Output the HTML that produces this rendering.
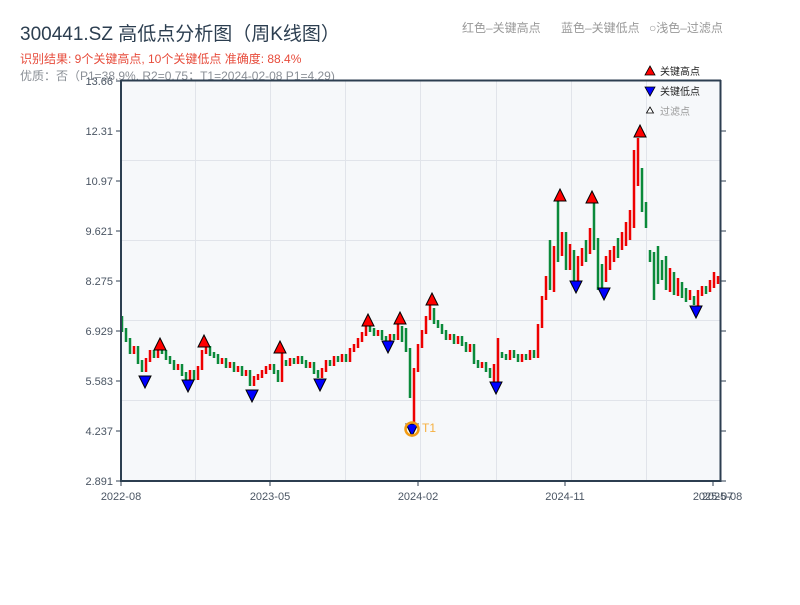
<!DOCTYPE html>
<html><head><meta charset="utf-8"><style>
body{margin:0;width:800px;height:600px;background:#fff;overflow:hidden;font-family:"Liberation Sans","Noto Sans CJK SC",sans-serif;}
svg text{font-family:"Liberation Sans","Noto Sans CJK SC",sans-serif;}
</style></head><body>
<svg width="800" height="600" viewBox="0 0 800 600" xmlns="http://www.w3.org/2000/svg">
<text x="20" y="40" font-size="19" fill="#2c3e50">300441.SZ 高低点分析图（周K线图）</text>
<text x="20" y="63" font-size="12" fill="#e74c3c">识别结果: 9个关键高点, 10个关键低点  准确度: 88.4%</text>
<text x="20" y="80" font-size="12" fill="#8a8f96">优质：否（P1=38.9%, R2=0.75；T1=2024-02-08 P1=4.29)</text>
<text x="462" y="32" font-size="12" fill="#999">红色–关键高点</text>
<text x="561" y="32" font-size="12" fill="#999">蓝色–关键低点</text>
<text x="649" y="32" font-size="12" fill="#999">○浅色–过滤点</text>
<rect x="121" y="80" width="600" height="401" fill="#f6f8fa"/>
<g stroke="#e1e4ea" stroke-width="1">
<line x1="195.5" y1="80" x2="195.5" y2="481"/><line x1="270.5" y1="80" x2="270.5" y2="481"/><line x1="345.5" y1="80" x2="345.5" y2="481"/><line x1="420.5" y1="80" x2="420.5" y2="481"/><line x1="496.5" y1="80" x2="496.5" y2="481"/><line x1="571.5" y1="80" x2="571.5" y2="481"/><line x1="646.5" y1="80" x2="646.5" y2="481"/>
<line x1="121" y1="160.5" x2="721" y2="160.5"/><line x1="121" y1="240.5" x2="721" y2="240.5"/><line x1="121" y1="320.5" x2="721" y2="320.5"/><line x1="121" y1="400.5" x2="721" y2="400.5"/>
</g>
<g stroke="#0a8a3a" stroke-width="2.5">
<line x1="122" y1="316" x2="122" y2="332"/><line x1="126" y1="328" x2="126" y2="342"/><line x1="130" y1="338" x2="130" y2="354"/><line x1="138" y1="346" x2="138" y2="364"/><line x1="142" y1="360" x2="142" y2="372"/><line x1="154" y1="350" x2="154" y2="358"/><line x1="162" y1="346" x2="162" y2="354"/><line x1="166" y1="350" x2="166" y2="360"/><line x1="170" y1="356" x2="170" y2="364"/><line x1="174" y1="360" x2="174" y2="370"/><line x1="182" y1="364" x2="182" y2="376"/><line x1="186" y1="372" x2="186" y2="380"/><line x1="194" y1="370" x2="194" y2="380"/><line x1="210" y1="346" x2="210" y2="356"/><line x1="214" y1="352" x2="214" y2="358"/><line x1="218" y1="354" x2="218" y2="364"/><line x1="226" y1="358" x2="226" y2="368"/><line x1="234" y1="362" x2="234" y2="372"/><line x1="242" y1="366" x2="242" y2="376"/><line x1="250" y1="370" x2="250" y2="386"/><line x1="274" y1="364" x2="274" y2="374"/><line x1="278" y1="370" x2="278" y2="382"/><line x1="286" y1="360" x2="286" y2="366"/><line x1="294" y1="358" x2="294" y2="364"/><line x1="302" y1="356" x2="302" y2="364"/><line x1="306" y1="360" x2="306" y2="368"/><line x1="314" y1="362" x2="314" y2="374"/><line x1="318" y1="370" x2="318" y2="378"/><line x1="330" y1="360" x2="330" y2="366"/><line x1="338" y1="356" x2="338" y2="362"/><line x1="346" y1="354" x2="346" y2="362"/><line x1="370" y1="324" x2="370" y2="332"/><line x1="374" y1="328" x2="374" y2="336"/><line x1="382" y1="330" x2="382" y2="340"/><line x1="386" y1="336" x2="386" y2="344"/><line x1="394" y1="334" x2="394" y2="340"/><line x1="402" y1="326" x2="402" y2="342"/><line x1="406" y1="328" x2="406" y2="352"/><line x1="410" y1="348" x2="410" y2="398"/><line x1="434" y1="308" x2="434" y2="324"/><line x1="438" y1="320" x2="438" y2="328"/><line x1="442" y1="324" x2="442" y2="334"/><line x1="446" y1="330" x2="446" y2="340"/><line x1="454" y1="334" x2="454" y2="344"/><line x1="462" y1="336" x2="462" y2="346"/><line x1="466" y1="342" x2="466" y2="352"/><line x1="474" y1="344" x2="474" y2="364"/><line x1="478" y1="360" x2="478" y2="368"/><line x1="486" y1="362" x2="486" y2="372"/><line x1="490" y1="368" x2="490" y2="378"/><line x1="502" y1="352" x2="502" y2="358"/><line x1="506" y1="354" x2="506" y2="360"/><line x1="514" y1="350" x2="514" y2="358"/><line x1="518" y1="354" x2="518" y2="362"/><line x1="526" y1="354" x2="526" y2="360"/><line x1="534" y1="350" x2="534" y2="358"/><line x1="550" y1="240" x2="550" y2="290"/><line x1="558" y1="200" x2="558" y2="262"/><line x1="566" y1="232" x2="566" y2="270"/><line x1="574" y1="250" x2="574" y2="281"/><line x1="586" y1="240" x2="586" y2="262"/><line x1="594" y1="202" x2="594" y2="250"/><line x1="598" y1="238" x2="598" y2="290"/><line x1="602" y1="264" x2="602" y2="288"/><line x1="618" y1="238" x2="618" y2="258"/><line x1="642" y1="168" x2="642" y2="212"/><line x1="646" y1="202" x2="646" y2="228"/><line x1="650" y1="250" x2="650" y2="262"/><line x1="654" y1="252" x2="654" y2="300"/><line x1="658" y1="246" x2="658" y2="284"/><line x1="662" y1="260" x2="662" y2="280"/><line x1="666" y1="256" x2="666" y2="290"/><line x1="674" y1="272" x2="674" y2="295"/><line x1="682" y1="282" x2="682" y2="298"/><line x1="686" y1="288" x2="686" y2="302"/><line x1="694" y1="296" x2="694" y2="305"/><line x1="706" y1="286" x2="706" y2="294"/>
</g>
<g stroke="#e00" stroke-width="2.5">
<line x1="134" y1="346" x2="134" y2="354"/><line x1="146" y1="358" x2="146" y2="372"/><line x1="150" y1="350" x2="150" y2="362"/><line x1="158" y1="346" x2="158" y2="358"/><line x1="178" y1="364" x2="178" y2="370"/><line x1="190" y1="370" x2="190" y2="380"/><line x1="198" y1="366" x2="198" y2="380"/><line x1="202" y1="350" x2="202" y2="370"/><line x1="206" y1="346" x2="206" y2="354"/><line x1="222" y1="358" x2="222" y2="364"/><line x1="230" y1="362" x2="230" y2="368"/><line x1="238" y1="366" x2="238" y2="372"/><line x1="246" y1="370" x2="246" y2="376"/><line x1="254" y1="376" x2="254" y2="386"/><line x1="258" y1="374" x2="258" y2="380"/><line x1="262" y1="370" x2="262" y2="378"/><line x1="266" y1="366" x2="266" y2="374"/><line x1="270" y1="364" x2="270" y2="370"/><line x1="282" y1="353" x2="282" y2="382"/><line x1="290" y1="358" x2="290" y2="366"/><line x1="298" y1="356" x2="298" y2="364"/><line x1="310" y1="362" x2="310" y2="368"/><line x1="322" y1="368" x2="322" y2="378"/><line x1="326" y1="360" x2="326" y2="372"/><line x1="334" y1="356" x2="334" y2="366"/><line x1="342" y1="354" x2="342" y2="362"/><line x1="350" y1="348" x2="350" y2="362"/><line x1="354" y1="344" x2="354" y2="352"/><line x1="358" y1="338" x2="358" y2="348"/><line x1="362" y1="332" x2="362" y2="342"/><line x1="366" y1="324" x2="366" y2="336"/><line x1="378" y1="330" x2="378" y2="336"/><line x1="390" y1="334" x2="390" y2="344"/><line x1="398" y1="324" x2="398" y2="340"/><line x1="414" y1="368" x2="414" y2="425"/><line x1="418" y1="344" x2="418" y2="372"/><line x1="422" y1="330" x2="422" y2="348"/><line x1="426" y1="316" x2="426" y2="334"/><line x1="430" y1="304" x2="430" y2="320"/><line x1="450" y1="334" x2="450" y2="340"/><line x1="458" y1="336" x2="458" y2="344"/><line x1="470" y1="344" x2="470" y2="352"/><line x1="482" y1="362" x2="482" y2="368"/><line x1="494" y1="364" x2="494" y2="382"/><line x1="498" y1="338" x2="498" y2="382"/><line x1="510" y1="350" x2="510" y2="360"/><line x1="522" y1="354" x2="522" y2="362"/><line x1="530" y1="350" x2="530" y2="360"/><line x1="538" y1="324" x2="538" y2="358"/><line x1="542" y1="296" x2="542" y2="328"/><line x1="546" y1="276" x2="546" y2="300"/><line x1="554" y1="246" x2="554" y2="292"/><line x1="562" y1="232" x2="562" y2="256"/><line x1="570" y1="244" x2="570" y2="270"/><line x1="578" y1="256" x2="578" y2="282"/><line x1="582" y1="248" x2="582" y2="266"/><line x1="590" y1="228" x2="590" y2="254"/><line x1="606" y1="256" x2="606" y2="282"/><line x1="610" y1="250" x2="610" y2="270"/><line x1="614" y1="246" x2="614" y2="262"/><line x1="622" y1="232" x2="622" y2="250"/><line x1="626" y1="222" x2="626" y2="246"/><line x1="630" y1="210" x2="630" y2="240"/><line x1="634" y1="150" x2="634" y2="228"/><line x1="638" y1="138" x2="638" y2="186"/><line x1="670" y1="268" x2="670" y2="292"/><line x1="678" y1="278" x2="678" y2="296"/><line x1="690" y1="290" x2="690" y2="300"/><line x1="698" y1="290" x2="698" y2="306"/><line x1="702" y1="286" x2="702" y2="296"/><line x1="710" y1="280" x2="710" y2="292"/><line x1="714" y1="272" x2="714" y2="288"/><line x1="718" y1="276" x2="718" y2="284"/>
</g>
<g stroke="#2c3e50" stroke-width="2" fill="none">
<line x1="121" y1="80" x2="121" y2="482"/><line x1="720.5" y1="80" x2="720.5" y2="482"/><line x1="120" y1="481" x2="721" y2="481"/><line x1="121" y1="80.5" x2="721" y2="80.5"/>
</g>
<g stroke="#2c3e50" stroke-width="1">
<line x1="116" y1="81" x2="121" y2="81"/><line x1="116" y1="131" x2="121" y2="131"/><line x1="116" y1="181" x2="121" y2="181"/><line x1="116" y1="231" x2="121" y2="231"/><line x1="116" y1="281" x2="121" y2="281"/><line x1="116" y1="331" x2="121" y2="331"/><line x1="116" y1="381" x2="121" y2="381"/><line x1="116" y1="431" x2="121" y2="431"/><line x1="116" y1="481" x2="121" y2="481"/>
<line x1="721" y1="131" x2="726" y2="131"/><line x1="721" y1="181" x2="726" y2="181"/><line x1="721" y1="231" x2="726" y2="231"/><line x1="721" y1="281" x2="726" y2="281"/><line x1="721" y1="331" x2="726" y2="331"/><line x1="721" y1="381" x2="726" y2="381"/><line x1="721" y1="431" x2="726" y2="431"/><line x1="721" y1="481" x2="726" y2="481"/>
<line x1="121" y1="481" x2="121" y2="486"/><line x1="270" y1="481" x2="270" y2="486"/><line x1="418" y1="481" x2="418" y2="486"/><line x1="565" y1="481" x2="565" y2="486"/><line x1="713" y1="481" x2="713" y2="486"/>
</g>
<g font-size="11" fill="#4a5563" text-anchor="end">
<text x="113" y="85">13.66</text><text x="113" y="135">12.31</text><text x="113" y="185">10.97</text><text x="113" y="235">9.621</text><text x="113" y="285">8.275</text><text x="113" y="335">6.929</text><text x="113" y="385">5.583</text><text x="113" y="435">4.237</text><text x="113" y="485">2.891</text>
</g>
<g font-size="11" fill="#4a5563" text-anchor="middle">
<text x="121" y="500">2022-08</text><text x="270" y="500">2023-05</text><text x="418" y="500">2024-02</text><text x="565" y="500">2024-11</text><text x="713" y="500">2025-07</text><text x="722" y="500">2025-08</text>
</g>
<g stroke="#000" stroke-width="1" fill="#f00">
<polygon points="160,338 166,350 154,350"/><polygon points="204,335 210,347 198,347"/><polygon points="280,341 286,353 274,353"/><polygon points="368,314 374,326 362,326"/><polygon points="400,312 406,324 394,324"/><polygon points="432,293 438,305 426,305"/><polygon points="560,189 566,201 554,201"/><polygon points="592,191 598,203 586,203"/><polygon points="640,125 646,137 634,137"/>
</g>
<g stroke="#000" stroke-width="1" fill="#00f">
<polygon points="145,388 151,376 139,376"/><polygon points="188,392 194,380 182,380"/><polygon points="252,402 258,390 246,390"/><polygon points="320,391 326,379 314,379"/><polygon points="388,353 394,341 382,341"/><polygon points="412,436 418,424 406,424"/><polygon points="496,394 502,382 490,382"/><polygon points="576,293 582,281 570,281"/><polygon points="604,300 610,288 598,288"/><polygon points="696,318 702,306 690,306"/>
</g>
<circle cx="412" cy="429" r="6.5" fill="none" stroke="#f39c12" stroke-width="2.5"/>
<text x="422" y="432" font-size="12" fill="#f5b041">T1</text>
<polygon points="650,66 655,75 645,75" fill="#f00" stroke="#000" stroke-width="0.8"/>
<text x="660" y="75" font-size="10" fill="#222">关键高点</text>
<polygon points="645,87 655,87 650,96" fill="#00f" stroke="#000" stroke-width="0.8"/>
<text x="660" y="95" font-size="10" fill="#222">关键低点</text>
<polygon points="650,107 653.5,113 646.5,113" fill="#fff" stroke="#000" stroke-width="0.8"/>
<text x="660" y="115" font-size="10" fill="#999">过滤点</text>
</svg>
</body></html>
